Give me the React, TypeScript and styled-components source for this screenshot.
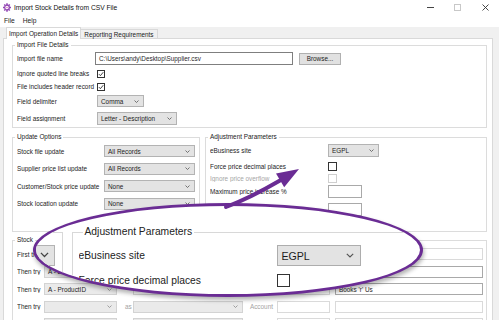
import React from 'react';
import styled, { createGlobalStyle } from 'styled-components';

const PURPLE = '#6a2c94';

const GlobalStyle = createGlobalStyle`
  html, body {
    margin: 0;
    padding: 0;
    background: #fff;
  }
  body {
    font-family: "Liberation Sans", Arial, sans-serif;
  }
  * {
    box-sizing: border-box;
  }
`;

const Screen = styled.div`
  position: relative;
  width: 499px;
  height: 320px;
  overflow: hidden;
  background: #fff;
  font-size: 6.4px;
  color: #1c1c1c;
`;

/* ---------- window chrome ---------- */

const TitleBar = styled.div`
  height: 14px;
  display: flex;
  align-items: center;
  padding-left: 3px;
`;

const Title = styled.span`
  margin-left: 3px;
  font-size: 6.7px;
  color: #111;
`;

const WinControls = styled.div`
  margin-left: auto;
  display: flex;
  height: 100%;
`;

const WinBtn = styled.div`
  width: 27.5px;
  display: flex;
  align-items: center;
  justify-content: center;
`;

const MenuBar = styled.div`
  height: 13px;
  display: flex;
  align-items: center;
  gap: 8px;
  padding-left: 4px;
  font-size: 6.7px;
`;

const Body = styled.div`
  height: 293px;
  background: #f0f0f0;
  padding: 0 6px 0 3px;
`;

const TabStrip = styled.div`
  height: 11px;
  display: flex;
  align-items: flex-end;
  padding-left: 3px;
`;

const Tab = styled.div<{ $active?: boolean }>`
  position: relative;
  z-index: ${p => (p.$active ? 1 : 0)};
  height: ${p => (p.$active ? 12 : 9)}px;
  margin-bottom: ${p => (p.$active ? -1 : 0)}px;
  padding: 0 ${p => (p.$active ? 2 : 3)}px;
  display: flex;
  align-items: center;
  white-space: nowrap;
  background: ${p => (p.$active ? '#fff' : '#f0f0f0')};
  border: 1px solid #d9d9d9;
  border-bottom: none;
  border-left: ${p => (p.$active ? '1px solid #d9d9d9' : 'none')};
`;

const TabPage = styled.div`
  height: 290px;
  background: #fff;
  border: 1px solid #d9d9d9;
  padding: 2px 5px 0 8px;
  display: flex;
  flex-direction: column;
`;

/* ---------- group boxes ---------- */

const Group = styled.fieldset<{ $w?: number; $mt?: number }>`
  margin: ${p => p.$mt ?? 0}px 0 0 0;
  padding: 0;
  min-width: 0;
  border: 1px solid #dcdcdc;
  ${p => (p.$w ? `width: ${p.$w}px; flex-shrink: 0;` : 'flex: 1;')}
`;

const Legend = styled.legend`
  margin-left: 2px;
  padding: 0 2px;
  line-height: 8px;
  font-size: 6.4px;
  color: #222;
`;

const GroupBody = styled.div<{ $pt: number }>`
  display: flex;
  flex-direction: column;
  padding: ${p => p.$pt}px 3px 2px 4px;
`;

const GroupRow = styled.div`
  display: flex;
  gap: 5px;
  height: 99px;
  margin-top: 5px;
  flex-shrink: 0;
`;

const Row = styled.div<{ $h: number; $mt?: number }>`
  display: flex;
  align-items: center;
  height: ${p => p.$h}px;
  margin-top: ${p => p.$mt ?? 0}px;
  flex-shrink: 0;
`;

const Label = styled.span<{ $w?: number; $muted?: boolean }>`
  ${p => (p.$w ? `width: ${p.$w}px;` : '')}
  flex-shrink: 0;
  white-space: nowrap;
  overflow: hidden;
  color: ${p => (p.$muted ? '#a6a6a6' : '#1c1c1c')};
`;

/* ---------- controls ---------- */

const Field = styled.div<{ $w?: number; $h?: number; $tone?: 'dark' | 'light' }>`
  ${p => (p.$w ? `width: ${p.$w}px;` : '')}
  height: ${p => p.$h ?? 12}px;
  background: #fff;
  border: 1px solid ${p => (p.$tone === 'dark' ? '#a9a9a9' : p.$tone === 'light' ? '#dadada' : '#7f7f7f')};
  display: flex;
  align-items: center;
  padding-left: 3px;
  white-space: nowrap;
  overflow: hidden;
  color: #2a2a2a;
`;

const SelectBox = styled.div<{ $w?: number; $h?: number; $ml?: number; $light?: boolean }>`
  ${p => (p.$w ? `width: ${p.$w}px;` : '')}
  height: ${p => p.$h ?? 12}px;
  margin-left: ${p => p.$ml ?? 0}px;
  background: ${p => (p.$light ? '#eaeaea' : '#e3e3e3')};
  border: 1px solid ${p => (p.$light ? '#d3d3d3' : '#b3b3b3')};
  display: flex;
  align-items: center;
  justify-content: space-between;
  padding: 0 4px 0 3px;
  white-space: nowrap;
  overflow: hidden;
  color: #1c1c1c;
`;

const Button = styled.div`
  width: 42px;
  height: 12px;
  margin-left: 6px;
  background: #e1e1e1;
  border: 1px solid #b0b0b0;
  display: flex;
  align-items: center;
  justify-content: center;
`;

const CheckBox = styled.span<{ $size?: number; $ml?: number; $disabled?: boolean }>`
  width: ${p => p.$size ?? 8}px;
  height: ${p => p.$size ?? 8}px;
  margin-left: ${p => p.$ml ?? 0}px;
  flex-shrink: 0;
  background: #fff;
  border: 1px solid ${p => (p.$disabled ? '#cfcfcf' : '#333')};
  display: inline-flex;
  align-items: center;
  justify-content: center;
`;

const StockRow = styled.div<{ $mt?: number }>`
  display: grid;
  grid-template-columns: 27px 73px 16px 110px 34px 53px 153px;
  align-items: center;
  height: 12px;
  margin-top: ${p => p.$mt ?? 0}px;
  flex-shrink: 0;
`;

const Side = styled.span<{ $align: 'left' | 'right' }>`
  color: #a3a3a3;
  text-align: ${p => p.$align};
  padding: ${p => (p.$align === 'left' ? '0 0 0 8px' : '0 4px 0 0')};
`;

const WideCell = styled.div<{ $from: number; $to: number }>`
  grid-column: ${p => p.$from} / ${p => p.$to};
`;

const EndCell = styled.div`
  justify-self: end;
  width: 148px;
`;

/* ---------- callout overlay ---------- */

const Callout = styled.div`
  position: absolute;
  z-index: 2;
  left: 33px;
  top: 203px;
  width: 390px;
  height: 94px;
  border: 3px solid ${PURPLE};
  border-radius: 50%;
  overflow: hidden;
  background: #fff;
  box-shadow: 1px 3px 4px rgba(0, 0, 0, 0.3);
`;

const MagCanvas = styled.div`
  position: absolute;
  left: -36px;
  top: 19px;
  width: 520px;
  display: flex;
  gap: 9px;
  font-size: 10.3px;
`;

const MagNeighbour = styled.div`
  width: 63px;
  height: 100px;
  margin-top: 7px;
  flex-shrink: 0;
  border-top: 1.5px solid #d8d8d8;
  border-right: 1.5px solid #d8d8d8;
  display: flex;
  justify-content: flex-end;
  align-items: flex-start;
  padding: 11.5px 7.5px 0 0;
`;

const MagStub = styled.div`
  width: 40px;
  height: 21px;
  background: #e3e3e3;
  border: 1.5px solid #b3b3b3;
  display: flex;
  align-items: center;
  justify-content: flex-end;
  padding-right: 5px;
`;

const MagGroup = styled.fieldset`
  margin: 0;
  padding: 0 5.5px;
  flex: 1;
  border: 1.5px solid #d8d8d8;
`;

const MagLegend = styled.legend`
  margin-left: 4px;
  padding: 0 2px;
  line-height: 14px;
  color: #222;
`;

const MagBody = styled.div`
  display: flex;
  flex-direction: column;
  padding-top: 6px;
`;

const MagSelect = styled.div`
  width: 84px;
  height: 21px;
  background: #e3e3e3;
  border: 1.5px solid #adadad;
  display: flex;
  align-items: center;
  justify-content: space-between;
  padding: 0 6px 0 4px;
  font-size: 10.6px;
`;

const MagCheck = styled.span<{ $disabled?: boolean }>`
  width: 13px;
  height: 13px;
  background: #fff;
  border: 1.5px solid ${p => (p.$disabled ? '#cfcfcf' : '#333')};
`;

const ArrowLayer = styled.svg`
  position: absolute;
  z-index: 3;
  left: 0;
  top: 0;
  pointer-events: none;
`;

/* ---------- drawings ---------- */

function Chevron({ w = 5, color = '#555', sw = 1 }: { w?: number; color?: string; sw?: number }) {
  return (
    <svg width={w} height={w * 0.6} viewBox="0 0 10 6">
      <polyline points="1,1 5,5 9,1" fill="none" stroke={color} strokeWidth={sw * 1.6} />
    </svg>
  );
}

function Tick() {
  return (
    <svg width="6" height="6" viewBox="0 0 10 10">
      <polyline points="1.5,5.2 4,7.8 8.8,2" fill="none" stroke="#222" strokeWidth="1.4" />
    </svg>
  );
}

function AppIcon() {
  return (
    <svg width="8" height="9" viewBox="0 0 16 18">
      <g fill="#9146b3">
        <rect x="6.5" y="0.5" width="3" height="4" />
        <rect x="6.5" y="13.5" width="3" height="4" />
        <rect x="0" y="7.5" width="4" height="3" />
        <rect x="12" y="7.5" width="4" height="3" />
        <rect x="2" y="2.5" width="3" height="3" transform="rotate(45 3.5 4)" />
        <rect x="11" y="2.5" width="3" height="3" transform="rotate(45 12.5 4)" />
        <rect x="2" y="12.5" width="3" height="3" transform="rotate(45 3.5 14)" />
        <rect x="11" y="12.5" width="3" height="3" transform="rotate(45 12.5 14)" />
      </g>
      <circle cx="8" cy="9" r="4.6" fill="none" stroke="#9146b3" strokeWidth="2.4" />
      <circle cx="8" cy="9" r="1.6" fill="#e07bb8" />
    </svg>
  );
}

function Select({ text, w, h, ml, light }: { text?: string; w?: number; h?: number; ml?: number; light?: boolean }) {
  return (
    <SelectBox $w={w} $h={h} $ml={ml} $light={light}>
      <span>{text ?? ''}</span>
      <Chevron color={light ? '#8a8a8a' : '#555'} />
    </SelectBox>
  );
}

export default function App() {
  return (
    <>
      <GlobalStyle />
      <Screen>
        <TitleBar>
          <AppIcon />
          <Title>Import Stock Details from CSV File</Title>
          <WinControls>
            <WinBtn>
              <svg width="7" height="1" viewBox="0 0 7 1">
                <rect width="7" height="1" fill="#444" />
              </svg>
            </WinBtn>
            <WinBtn>
              <svg width="7" height="7" viewBox="0 0 7 7">
                <rect x="0.5" y="0.5" width="6" height="6" fill="none" stroke="#c8c8c8" />
              </svg>
            </WinBtn>
            <WinBtn>
              <svg width="7" height="7" viewBox="0 0 7 7">
                <path d="M0.5 0.5 L6.5 6.5 M6.5 0.5 L0.5 6.5" stroke="#333" strokeWidth="0.9" />
              </svg>
            </WinBtn>
          </WinControls>
        </TitleBar>

        <MenuBar>
          <span>File</span>
          <span>Help</span>
        </MenuBar>

        <Body>
          <TabStrip>
            <Tab $active>Import Operation Details</Tab>
            <Tab>Reporting Requirements</Tab>
          </TabStrip>

          <TabPage>
            <Group>
              <Legend>Import File Details</Legend>
              <GroupBody $pt={3}>
                <Row $h={13}>
                  <Label $w={78}>Import file name</Label>
                  <Field $w={198} $h={13}>C:\Users\andy\Desktop\Supplier.csv</Field>
                  <Button>Browse...</Button>
                </Row>
                <Row $h={13} $mt={2}>
                  <Label $w={78}>Ignore quoted line breaks</Label>
                  <CheckBox $ml={2}>
                    <Tick />
                  </CheckBox>
                </Row>
                <Row $h={13}>
                  <Label $w={78}>File includes header record</Label>
                  <CheckBox $ml={2}>
                    <Tick />
                  </CheckBox>
                </Row>
                <Row $h={12} $mt={2}>
                  <Label $w={78}>Field delimiter</Label>
                  <Select text="Comma" w={47} ml={2} />
                </Row>
                <Row $h={13} $mt={5}>
                  <Label $w={78}>Field assignment</Label>
                  <Select text="Letter - Description" w={80} h={13} ml={2} />
                </Row>
              </GroupBody>
            </Group>

            <GroupRow>
              <Group $w={188}>
                <Legend>Update Options</Legend>
                <GroupBody $pt={4}>
                  <Row $h={12}>
                    <Label $w={87}>Stock file update</Label>
                    <Select text="All Records" w={91} />
                  </Row>
                  <Row $h={12} $mt={5.5}>
                    <Label $w={87}>Supplier price list update</Label>
                    <Select text="All Records" w={91} />
                  </Row>
                  <Row $h={12} $mt={5.5}>
                    <Label $w={87}>Customer/Stock price update</Label>
                    <Select text="None" w={91} />
                  </Row>
                  <Row $h={12} $mt={5.5}>
                    <Label $w={87}>Stock location update</Label>
                    <Select text="None" w={91} />
                  </Row>
                </GroupBody>
              </Group>

              <Group>
                <Legend>Adjustment Parameters</Legend>
                <GroupBody $pt={3}>
                  <Row $h={13}>
                    <Label $w={118}>eBusiness site</Label>
                    <Select text="EGPL" w={51} h={13} />
                  </Row>
                  <Row $h={11} $mt={3.5}>
                    <Label $w={118}>Force price decimal places</Label>
                    <CheckBox $size={9} />
                  </Row>
                  <Row $h={11} $mt={1}>
                    <Label $w={118} $muted>
                      Ignore price overflow
                    </Label>
                    <CheckBox $size={9} $disabled />
                  </Row>
                  <Row $h={13} $mt={1.5}>
                    <Label $w={118}>Maximum price increase %</Label>
                    <Field $w={34} $h={13} $tone="dark" />
                  </Row>
                  <Row $h={13} $mt={5}>
                    <Label $w={118} />
                    <Field $w={34} $h={13} $tone="dark" />
                  </Row>
                </GroupBody>
              </Group>
            </GroupRow>

            <Group $mt={4}>
              <Legend>Stock</Legend>
              <GroupBody $pt={4}>
                <StockRow>
                  <Label>First try</Label>
                  <Select light />
                  <span />
                  <Select light />
                  <span />
                  <Field $tone="light" />
                  <EndCell>
                    <Field $tone="light" />
                  </EndCell>
                </StockRow>
                <StockRow $mt={5.5}>
                  <Label>Then try</Label>
                  <Select text="A - Description" light />
                  <span />
                  <Select light />
                  <span />
                  <Field $tone="dark" />
                  <EndCell>
                    <Field $tone="dark" />
                  </EndCell>
                </StockRow>
                <StockRow $mt={5.5}>
                  <Label>Then try</Label>
                  <Select text="A - ProductID" light />
                  <span />
                  <WideCell $from={4} $to={7}>
                    <Field $tone="light" />
                  </WideCell>
                  <EndCell>
                    <Field $tone="dark">Books 'r' Us</Field>
                  </EndCell>
                </StockRow>
                <StockRow $mt={5.5}>
                  <Label>Then try</Label>
                  <Select light />
                  <Side $align="left">as</Side>
                  <Select light />
                  <Side $align="right">Account</Side>
                  <Field $tone="light" />
                  <EndCell>
                    <Field $tone="light" />
                  </EndCell>
                </StockRow>
                <StockRow $mt={5.5}>
                  <span />
                  <Select light />
                  <span />
                  <Select light />
                  <span />
                  <Field $tone="light" />
                  <EndCell>
                    <Field $tone="light" />
                  </EndCell>
                </StockRow>
              </GroupBody>
            </Group>
          </TabPage>
        </Body>

        <Callout>
          <MagCanvas>
            <MagNeighbour>
              <MagStub>
                <Chevron w={9} color="#444" sw={0.9} />
              </MagStub>
            </MagNeighbour>
            <MagGroup>
              <MagLegend>Adjustment Parameters</MagLegend>
              <MagBody>
                <Row $h={21}>
                  <Label $w={198}>eBusiness site</Label>
                  <MagSelect>
                    <span>EGPL</span>
                    <Chevron w={8} color="#555" sw={0.9} />
                  </MagSelect>
                </Row>
                <Row $h={14} $mt={7}>
                  <Label $w={198}>Force price decimal places</Label>
                  <MagCheck />
                </Row>
              </MagBody>
            </MagGroup>
          </MagCanvas>
        </Callout>

        <ArrowLayer width="499" height="320" viewBox="0 0 499 320">
          <path d="M 226 207 Q 250 198 280 180.5" fill="none" stroke={PURPLE} strokeWidth="4" strokeLinecap="round" />
          <polygon points="299,169 284.2,187.2 276,173.4" fill={PURPLE} />
        </ArrowLayer>
      </Screen>
    </>
  );
}
